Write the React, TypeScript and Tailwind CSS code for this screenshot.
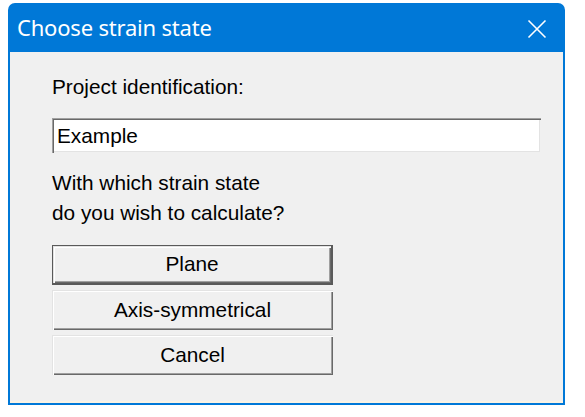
import React from 'react';

const bevel =
  'shadow-[inset_1px_1px_0_#e3e3e3,inset_2px_2px_0_#ffffff,inset_-1px_-1px_0_#696969,inset_-2px_-2px_0_#a0a0a0]';

function DialogButton({ label, isDefault }: { label: string; isDefault?: boolean }) {
  return (
    <button
      className={`h-[40px] w-[281px] bg-[#f0f0f0] text-[20.8px] leading-none text-black ${bevel} ${
        isDefault ? 'border border-[#5a5a5a] border-b-2 border-r-2' : ''
      }`}
    >
      {label}
    </button>
  );
}

export default function App() {
  return (
    <div
      className="w-[585px] h-[417px] bg-white pt-[3px] pl-[8px]"
      style={{ fontFamily: '"Liberation Sans", Arial, sans-serif' }}
    >
      <div className="w-[557px] h-[402px] rounded-t-[7px] bg-[#0078d7] flex flex-col">
        <div className="h-[49px] flex items-center justify-between pl-[9px] pr-[18px]">
          <span
            className="text-white text-[22px] tracking-[-0.2px]"
            style={{ fontFamily: '"Noto Sans", "Open Sans", sans-serif' }}
          >
            Choose strain state
          </span>
          <svg width="20" height="20" viewBox="0 0 20 20" className="mt-[2px]">
            <path d="M1.5 1.5 L18.5 18.5 M18.5 1.5 L1.5 18.5" stroke="#fff" strokeWidth="1.6" fill="none" />
          </svg>
        </div>
        <div className="flex-1 mx-[2px] mb-[2px] bg-[#f0f0f0] border-b-[2px] border-[#fbf3e4] pl-[42px] pt-[20px] text-black text-[20.8px] leading-[30px]">
          <div>Project identification:</div>
          <div className="mt-[16px] w-[489px] h-[35px] bg-white flex items-center pl-[5px] shadow-[inset_1px_1px_0_#a0a0a0,inset_2px_2px_0_#696969,inset_-1px_-1px_0_#f0f0f0,inset_-2px_-2px_0_#e3e3e3]">
            Example
          </div>
          <div className="mt-[15px]">
            <div>With which strain state</div>
            <div>do you wish to calculate?</div>
          </div>
          <div className="mt-[17px] flex flex-col gap-[5px]">
            <DialogButton label="Plane" isDefault />
            <DialogButton label="Axis-symmetrical" />
            <DialogButton label="Cancel" />
          </div>
        </div>
      </div>
    </div>
  );
}
